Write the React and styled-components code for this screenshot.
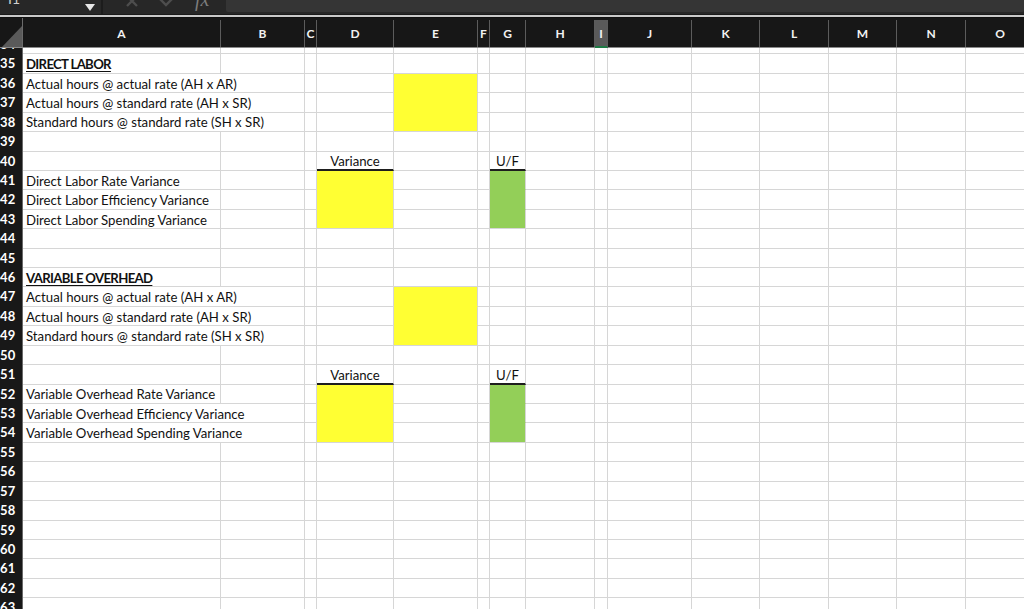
import React from 'react';
import styled, { createGlobalStyle } from 'styled-components';

const GlobalStyle = createGlobalStyle`
  html, body {
    margin: 0;
    padding: 0;
    background: #1b1b1b;
  }
  body {
    width: 1024px;
    height: 609px;
    overflow: hidden;
    font-family: Lato, "Open Sans", "Liberation Sans", sans-serif;
  }
`;

const ROW_H = 19.43;
const YELLOW = '#ffff33';
const GREEN = '#93cf58';

const COLUMNS = [
  { key: 'A', width: 198 },
  { key: 'B', width: 84 },
  { key: 'C', width: 12 },
  { key: 'D', width: 77 },
  { key: 'E', width: 84 },
  { key: 'F', width: 12 },
  { key: 'G', width: 36 },
  { key: 'H', width: 69 },
  { key: 'I', width: 13 },
  { key: 'J', width: 84 },
  { key: 'K', width: 68 },
  { key: 'L', width: 69 },
  { key: 'M', width: 68 },
  { key: 'N', width: 69 },
  { key: 'O', width: 69 },
];

const SELECTED_COL = 'I';

// sheet contents, keyed by row then column
const CELLS = {
  35: { A: { text: 'DIRECT LABOR', bold: true } },
  36: { A: { text: 'Actual hours @ actual rate (AH x AR)', spill: true }, E: { fill: YELLOW } },
  37: { A: { text: 'Actual hours @ standard rate (AH x SR)', spill: true }, E: { fill: YELLOW } },
  38: { A: { text: 'Standard hours @ standard rate (SH x SR)', spill: true }, E: { fill: YELLOW } },
  40: { D: { text: 'Variance', head: true }, G: { text: 'U/F', head: true } },
  41: { A: { text: 'Direct Labor Rate Variance' }, D: { fill: YELLOW }, G: { fill: GREEN } },
  42: { A: { text: 'Direct Labor Efficiency Variance' }, D: { fill: YELLOW }, G: { fill: GREEN } },
  43: { A: { text: 'Direct Labor Spending Variance' }, D: { fill: YELLOW }, G: { fill: GREEN } },
  46: { A: { text: 'VARIABLE OVERHEAD', bold: true } },
  47: { A: { text: 'Actual hours @ actual rate (AH x AR)', spill: true }, E: { fill: YELLOW } },
  48: { A: { text: 'Actual hours @ standard rate (AH x SR)', spill: true }, E: { fill: YELLOW } },
  49: { A: { text: 'Standard hours @ standard rate (SH x SR)', spill: true }, E: { fill: YELLOW } },
  51: { D: { text: 'Variance', head: true }, G: { text: 'U/F', head: true } },
  52: { A: { text: 'Variable Overhead Rate Variance' }, D: { fill: YELLOW }, G: { fill: GREEN } },
  53: { A: { text: 'Variable Overhead Efficiency Variance', spill: true }, D: { fill: YELLOW }, G: { fill: GREEN } },
  54: { A: { text: 'Variable Overhead Spending Variance', spill: true }, D: { fill: YELLOW }, G: { fill: GREEN } },
};

const ROWS = Array.from({ length: 30 }, (_, i) => 34 + i);

const Window = styled.div`
  width: 1024px;
  height: 609px;
  display: flex;
  flex-direction: column;
  overflow: hidden;
  background: #ffffff;
`;

const FormulaBar = styled.div`
  height: 14px;
  flex: none;
  display: flex;
  align-items: flex-end;
  overflow: hidden;
  background: #272727;
  border-bottom: 1px solid #1a1a1a;
`;

const NameBox = styled.div`
  width: 103px;
  height: 14px;
  flex: none;
  display: flex;
  align-items: flex-end;
  justify-content: space-between;
  border-right: 2px solid #1c1c1c;
  box-sizing: border-box;
  padding: 0 6px 0 0;
`;

const ClippedText = styled.span`
  display: block;
  height: 30px;
  line-height: 30px;
  font-size: ${p => p.size || 14}px;
  color: ${p => p.color || '#d0d0d0'};
  font-family: ${p => p.serif ? '"Liberation Serif", serif' : 'inherit'};
  font-style: ${p => p.serif ? 'italic' : 'normal'};
  padding-left: ${p => p.pad || 0}px;
`;

const Caret = styled.svg`
  align-self: center;
  margin-top: 1px;
`;

const ActionIcons = styled.div`
  width: 120px;
  height: 14px;
  display: flex;
  align-items: flex-end;
  gap: 20px;
  padding-left: 22px;
  box-sizing: border-box;
  flex: none;
`;

const FormulaInput = styled.div`
  flex: 1;
  height: 12px;
  align-self: flex-start;
  margin-left: 3px;
  background: #353535;
  border-radius: 0 0 2px 2px;
`;

const Divider = styled.div`
  height: 2px;
  flex: none;
  background: #c9c9c9;
`;

const Spacer = styled.div`
  height: 1px;
  flex: none;
  background: #111111;
`;

const HeaderRow = styled.div`
  height: 30px;
  flex: none;
  display: flex;
  background: #171717;
  border-bottom: 1px solid #8a8a8a;
  box-sizing: border-box;
`;

const Corner = styled.div`
  width: 22px;
  flex: none;
  display: flex;
  align-items: flex-end;
  justify-content: flex-end;
  border-right: 1px solid #6a6a6a;
  box-sizing: content-box;
`;

const ColHead = styled.div`
  width: ${p => p.w}px;
  flex: none;
  box-sizing: border-box;
  display: flex;
  align-items: center;
  justify-content: center;
  border-right: 1px solid #5c5c5c;
  margin-top: 2px;
  color: #f2f2f2;
  font-size: 12px;
  font-weight: 700;
  background: ${p => p.selected ? '#5a5a5a' : 'transparent'};
  border-bottom: ${p => p.selected ? '2px solid #1f7a45' : 'none'};
  margin-bottom: ${p => p.selected ? '-1px' : '0'};
`;

const Body = styled.div`
  flex: 1;
  overflow: hidden;
`;

const Sheet = styled.div`
  margin-top: -13px;
`;

const Row = styled.div`
  height: ${ROW_H}px;
  display: flex;
`;

const RowHead = styled.div`
  width: 22px;
  flex: none;
  box-sizing: content-box;
  border-right: 1px solid #6a6a6a;
  border-bottom: 1px solid #353535;
  margin-bottom: -1px;
  background: #181818;
  color: #ffffff;
  font-size: 13px;
  font-weight: 700;
  line-height: ${ROW_H}px;
  overflow: hidden;
  white-space: nowrap;
  letter-spacing: 0.2px;
`;

const Cell = styled.div`
  width: ${p => p.w}px;
  flex: none;
  box-sizing: border-box;
  height: ${ROW_H}px;
  border-right: 1px solid #d6d6d6;
  border-bottom: ${p => p.bottom};
  background: ${p => p.fill || 'transparent'};
  display: flex;
  align-items: center;
  justify-content: ${p => p.center ? 'center' : 'flex-start'};
  padding: ${p => p.center ? '2px 0 0' : '1px 0 0 3px'};
  font-size: 13.2px;
  color: #111111;
  white-space: nowrap;
  overflow: hidden;
`;

const Label = styled.span`
  font-weight: ${p => p.bold ? 700 : 400};
  text-decoration: ${p => p.bold ? 'underline' : 'none'};
  text-underline-offset: 2px;
  letter-spacing: ${p => p.bold ? '-0.68px' : '0'};
`;

const XIcon = () => (
  <svg width="14" height="14" viewBox="0 0 14 14">
    <path d="M2 -4 L12 6 M12 -4 L2 6" stroke="#4d4d4d" strokeWidth="2.4" fill="none" />
  </svg>
);

const CheckIcon = () => (
  <svg width="16" height="14" viewBox="0 0 16 14">
    <path d="M1 -1 L7 5 L15 -3" stroke="#4d4d4d" strokeWidth="2.4" fill="none" />
  </svg>
);

function cellBottom(row, key, cell) {
  if (cell && cell.head) return '2px solid #1e1e1e';
  if (cell && cell.fill) {
    const next = CELLS[row + 1] && CELLS[row + 1][key];
    if (next && next.fill) return `1px solid ${cell.fill}`;
  }
  return '1px solid #d6d6d6';
}

function SheetRow({ row }) {
  const data = CELLS[row] || {};
  const cols = [];
  for (let i = 0; i < COLUMNS.length; i++) {
    const col = COLUMNS[i];
    const cell = data[col.key];
    let w = col.width;
    if (cell && cell.spill) {
      w += COLUMNS[i + 1].width;
      i++;
    }
    cols.push(
      <Cell
        key={col.key}
        w={w}
        fill={cell && cell.fill}
        center={cell && cell.head}
        bottom={cellBottom(row, col.key, cell)}
      >
        {cell && cell.text && <Label bold={cell.bold}>{cell.text}</Label>}
      </Cell>
    );
  }
  return (
    <Row>
      <RowHead>{row}</RowHead>
      {cols}
    </Row>
  );
}

export default function App() {
  return (
    <>
      <GlobalStyle />
      <Window>
        <FormulaBar>
          <NameBox>
            <ClippedText pad={8} color="#cfcfcf">I1</ClippedText>
            <Caret width="10" height="7" viewBox="0 0 10 7">
              <path d="M0 0 L10 0 L5 7 Z" fill="#e6e6e6" />
            </Caret>
          </NameBox>
          <ActionIcons>
            <XIcon />
            <CheckIcon />
            <ClippedText serif size={20} color="#7c7c7c">fx</ClippedText>
          </ActionIcons>
          <FormulaInput />
        </FormulaBar>
        <Divider />
        <Spacer />
        <HeaderRow>
          <Corner>
            <svg width="20" height="21" viewBox="0 0 20 21">
              <path d="M0 21 L20 21 L20 0 Z" fill="#5a5a5a" />
            </svg>
          </Corner>
          {COLUMNS.map(c => (
            <ColHead key={c.key} w={c.width} selected={c.key === SELECTED_COL}>
              {c.key}
            </ColHead>
          ))}
        </HeaderRow>
        <Body>
          <Sheet>
            {ROWS.map(r => <SheetRow key={r} row={r} />)}
          </Sheet>
        </Body>
      </Window>
    </>
  );
}
